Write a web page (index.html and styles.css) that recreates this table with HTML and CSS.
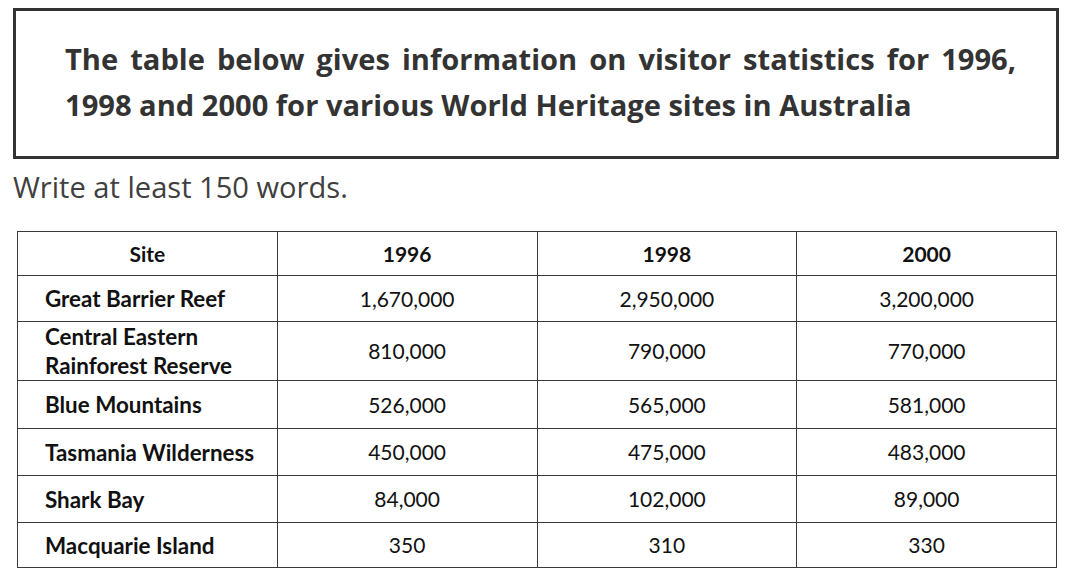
FILE: index.html
```html
<!DOCTYPE html>
<html lang="en">
<head>
<meta charset="utf-8">
<title>Task 1 – World Heritage sites</title>
<link rel="stylesheet" href="styles.css">
</head>
<body>
<div class="page">
  <div class="prompt-box">
    <p class="prompt">The table below gives information on visitor statistics for 1996, 1998 and 2000 for various World Heritage sites in Australia</p>
  </div>
  <p class="instruction">Write at least 150 words.</p>
  <table class="data">
    <thead>
      <tr class="r-head">
        <th class="site-h">Site</th>
        <th>1996</th>
        <th>1998</th>
        <th>2000</th>
      </tr>
    </thead>
    <tbody>
      <tr class="r1">
        <td class="site">Great Barrier Reef</td>
        <td>1,670,000</td>
        <td>2,950,000</td>
        <td>3,200,000</td>
      </tr>
      <tr class="r2">
        <td class="site">Central Eastern<br>Rainforest Reserve</td>
        <td>810,000</td>
        <td>790,000</td>
        <td>770,000</td>
      </tr>
      <tr class="r3">
        <td class="site">Blue Mountains</td>
        <td>526,000</td>
        <td>565,000</td>
        <td>581,000</td>
      </tr>
      <tr class="r4">
        <td class="site">Tasmania Wilderness</td>
        <td>450,000</td>
        <td>475,000</td>
        <td>483,000</td>
      </tr>
      <tr class="r5">
        <td class="site">Shark Bay</td>
        <td>84,000</td>
        <td>102,000</td>
        <td>89,000</td>
      </tr>
      <tr class="r6">
        <td class="site">Macquarie Island</td>
        <td>350</td>
        <td>310</td>
        <td>330</td>
      </tr>
    </tbody>
  </table>
</div>
</body>
</html>
```

FILE: styles.css
```css
html, body {
  margin: 0;
  padding: 0;
  background: #ffffff;
}

.page {
  padding: 8px 0 0 0;
  display: flex;
  flex-direction: column;
  align-items: flex-start;
}

.prompt-box {
  margin-left: 13px;
  width: 1046px;
  height: 151px;
  box-sizing: border-box;
  border: 3px solid #333333;
  padding: 25px 40px 0 49px;
}

.prompt {
  margin: 0;
  font-family: "Open Sans", "DejaVu Sans", sans-serif;
  font-weight: 700;
  font-size: 29.1px;
  line-height: 46px;
  color: #333333;
  text-align: justify;
}

.instruction {
  margin: 8px 0 0 13px;
  font-family: "Open Sans", "DejaVu Sans", sans-serif;
  font-weight: 400;
  font-size: 29.1px;
  line-height: 40px;
  color: #404040;
}

.data {
  margin: 24px 0 0 17px;
  width: 1040px;
  border-collapse: collapse;
  table-layout: fixed;
  font-family: "Lato", "Liberation Sans", sans-serif;
  font-size: 21px;
  color: #111111;
}

.data th,
.data td {
  border: 1px solid #3a3a3a;
  padding: 0;
  text-align: center;
  vertical-align: middle;
  line-height: 28px;
}

.data th {
  font-weight: 700;
}

.data td.site {
  text-align: left;
  padding-left: 27px;
  font-weight: 700;
  font-size: 22.4px;
  line-height: 29px;
}

.r-head { height: 44px; }
.r1 { height: 46px; }
.r2 { height: 58px; }
.r3 { height: 48px; }
.r4 { height: 47px; }
.r5 { height: 47px; }
.r6 { height: 45px; }
```
